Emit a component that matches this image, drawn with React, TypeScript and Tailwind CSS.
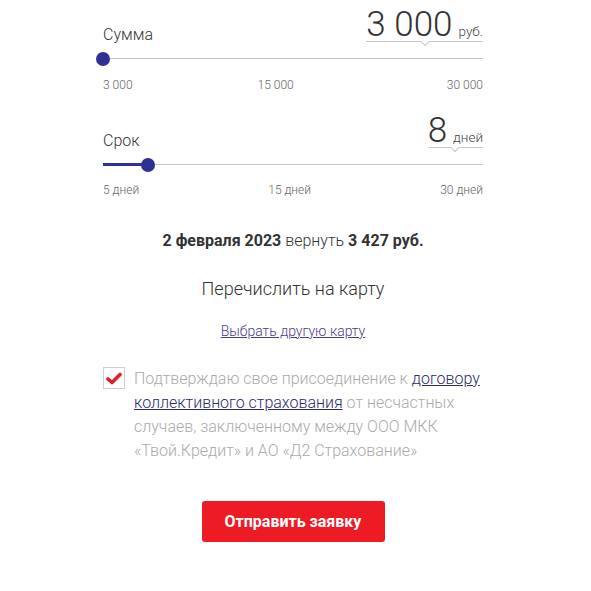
import React from "react";

function ValueBox({ value, unit }: { value: string; unit: string }) {
  return (
    <div className="relative flex items-baseline border-b border-[#c8c8c8]">
      <span className="text-[35px] leading-[32px] font-light text-[#333]">{value}</span>
      <span className="ml-[6px] text-[13.5px] leading-[14px] font-light text-[#444]">{unit}</span>
      <span className="absolute left-1/2 bottom-[-4px] w-[6px] h-[6px] -ml-[3px] rotate-45 bg-white border-r border-b border-[#c8c8c8]" />
    </div>
  );
}

function Slider({ pos }: { pos: number }) {
  return (
    <div className="relative h-[14px] mt-[10px]">
      <div className="absolute left-0 right-0 top-[6px] h-px bg-[#c8c8c8]" />
      {pos > 0 && (
        <div className="absolute left-0 top-[5px] h-[3px] bg-[#2e3192]" style={{ width: pos }} />
      )}
      <div
        className="absolute top-0 w-[14px] h-[14px] -ml-[7px] rounded-full bg-[#2e3192]"
        style={{ left: pos }}
      />
    </div>
  );
}

export default function App() {
  return (
    <div className="w-[591px] h-[591px] bg-white" style={{ fontFamily: "Roboto, 'Noto Sans', sans-serif" }}>
      <div className="ml-[103px] w-[380px]">
        {/* Сумма */}
        <div className="flex h-[42px] items-end justify-between">
          <span className="text-[16px] leading-[16px] font-light text-[#333] mb-[-1px]">Сумма</span>
          <ValueBox value="3 000" unit="руб." />
        </div>
        <Slider pos={0} />
        <div className="flex mt-[11px] text-[12px] leading-[16px] font-light text-[#666]">
          <span>3 000</span>
          <span className="ml-[125px]">15 000</span>
          <span className="ml-auto">30 000</span>
        </div>

        {/* Срок */}
        <div className="flex h-[42px] mt-[13px] items-end justify-between">
          <span className="text-[16px] leading-[16px] font-light text-[#333] mb-[-1px]">Срок</span>
          <ValueBox value="8" unit="дней" />
        </div>
        <Slider pos={45} />
        <div className="flex justify-between mt-[10px] text-[12px] leading-[16px] font-light text-[#666]">
          <span>5 дней</span>
          <span>15 дней</span>
          <span>30 дней</span>
        </div>

        <div className="mt-[33px] text-center text-[16px] leading-[20px] text-[#333]">
          <span className="font-bold">2 февраля 2023</span>{" "}
          <span className="font-light">вернуть</span>{" "}
          <span className="font-bold">3 427 руб.</span>
        </div>

        <div className="mt-[27px] text-center text-[18px] leading-[22px] font-light text-[#333]">
          Перечислить на карту
        </div>

        <div className="mt-[23px] text-center text-[14px] leading-[16px] font-light">
          <a className="underline text-[#4b3a8c]" href="#">Выбрать другую карту</a>
        </div>

        <div className="flex mt-[28px] items-start">
          <div className="w-[22px] h-[22px] shrink-0 border border-[#cfcfcf] flex items-center justify-center">
            <svg width="16" height="13" viewBox="0 0 16 13">
              <path d="M2 7 L6 10.5 L14 2.5" fill="none" stroke="#e31e24" strokeWidth="3.6" strokeLinecap="round" strokeLinejoin="round" />
            </svg>
          </div>
          <p className="ml-[9px] text-[16px] leading-[24px] font-light text-[#aaa]">
            Подтверждаю свое присоединение к{" "}
            <a href="#" className="underline text-[#2b2a6b]">договору коллективного страхования</a>{" "}
            от несчастных случаев, заключенному между ООО МКК «Твой.Кредит» и АО «Д2 Страхование»
          </p>
        </div>

        <div className="flex justify-center mt-[38px]">
          <button className="w-[183px] h-[41px] rounded-[3px] bg-[#ed1c24] text-white font-bold text-[16px]">
            Отправить заявку
          </button>
        </div>
      </div>
    </div>
  );
}
